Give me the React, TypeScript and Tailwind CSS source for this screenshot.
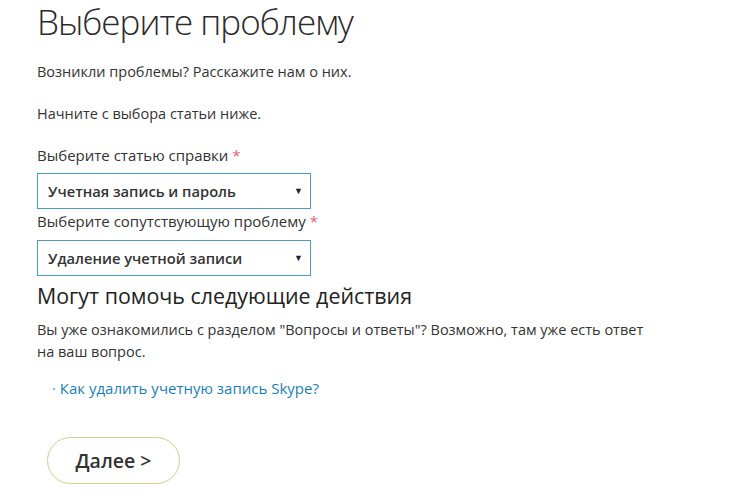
import React from "react";

export default function App() {
  return (
    <div className="w-[730px] h-[500px] bg-white overflow-hidden text-[#333] font-['Open_Sans',sans-serif]">
      <div className="pl-[37px]">
        <h1 className="text-[35px] font-light leading-[44px] text-[#2b2b2b] tracking-[-1px]">Выберите проблему</h1>
        <p className="mt-[18px] text-[14.5px] leading-[20px]">Возникли проблемы? Расскажите нам о них.</p>
        <p className="mt-[22px] text-[14.5px] leading-[20px]">Начните с выбора статьи ниже.</p>
        <label className="block mt-[21px] text-[15px] leading-[20px]">
          Выберите статью справки <span className="text-[#e0637a]">*</span>
        </label>
        <div className="mt-[8px] w-[274px] h-[36px] border border-[#4a9cc4] flex items-center justify-between pl-[10px] pr-[7px]">
          <span className="text-[14.7px] font-semibold text-[#333]">Учетная запись и пароль</span>
          <span className="text-[9px] text-[#222]">▼</span>
        </div>
        <label className="block mt-[2px] text-[15px] leading-[20px]">
          Выберите сопутствующую проблему <span className="text-[#e0637a]">*</span>
        </label>
        <div className="mt-[9px] w-[274px] h-[36px] border border-[#4a9cc4] flex items-center justify-between pl-[10px] pr-[7px]">
          <span className="text-[14.7px] font-semibold text-[#333]">Удаление учетной записи</span>
          <span className="text-[9px] text-[#222]">▼</span>
        </div>
        <h2 className="mt-[5px] text-[21.4px] leading-[30px] text-[#222]">Могут помочь следующие действия</h2>
        <p className="mt-[8px] w-[625px] text-[14.5px] leading-[22px]">
          Вы уже ознакомились с разделом "Вопросы и ответы"? Возможно, там уже есть ответ на ваш вопрос.
        </p>
        <div className="mt-[15px] pl-[15px] text-[15px] leading-[20px]">
          <span className="text-[#888]">· </span>
          <a className="text-[#1a7fb8]">Как удалить учетную запись Skype?</a>
        </div>
        <button className="mt-[39px] ml-[10px] w-[133px] h-[47px] rounded-full border border-[#cfcf8f] text-[19.5px] font-semibold text-[#333] flex items-center justify-center">
          Далее &gt;
        </button>
      </div>
    </div>
  );
}
